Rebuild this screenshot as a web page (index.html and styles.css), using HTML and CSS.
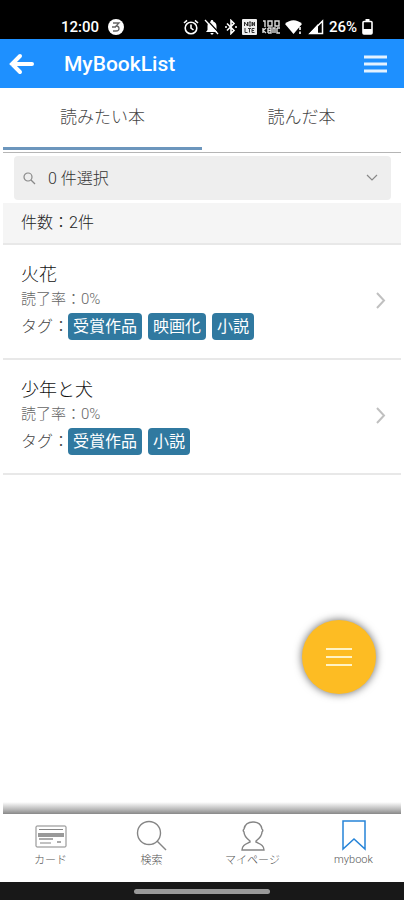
FILE: index.html
```html
<!DOCTYPE html>
<html lang="ja">
<head>
    <meta charset="UTF-8">
    <meta name="viewport" content="width=device-width, initial-scale=1.0">
    <title>MyBookList</title>
    <link rel="stylesheet" href="styles.css">
</head>
<body>

    <div class="status-bar">
        <span class="clock">12:00</span>
        <svg class="coin" width="16" height="16" viewBox="0 0 16 16"><circle cx="8" cy="8" r="8" fill="#fff"/><path d="M5 4h6L8 7c4 0 4 5 0 5H5M4 8h4" fill="none" stroke="#666" stroke-width="1.3"/></svg>
        <div class="status-icons">
            <svg width="16" height="16" viewBox="0 0 16 16" fill="none" stroke="#fff" stroke-width="1.6"><circle cx="8" cy="9" r="5.8"/><path d="M8 5.5V9l2.5 2M1 4l3-2.7M15 4l-3-2.7"/></svg>
            <svg width="16" height="16" viewBox="0 0 16 16"><path d="M8 1c1 0 1.3.6 1.3 1.5C11.500 3 12.500 5 12.500 7v4l1.500 2H2l1.500-2V7c0-2 1-4 3.200-4.500C6.700 1.600 7 1 8 1zM6.500 14h3c0 2-3 2-3 0z" fill="#fff"/><path d="M3 1l13 14" stroke="#000" stroke-width="1.200"/><path d="M1 1l13 14" stroke="#fff" stroke-width="1.300"/></svg>
            <svg width="12" height="16" viewBox="0 0 12 16" fill="none" stroke="#fff" stroke-width="1.6"><path d="M2 4.500l7 7-3 3v-13l3 3-7 7M0 8h2M10 8h2"/></svg>
            <svg width="15" height="16" viewBox="0 0 15 16"><rect width="15" height="16" rx="1" fill="#eee"/><path d="M2.500 7V3l3 4V3M7 3v4h2V3H7zM10.500 7V3l2 4V3M3 9v4.500h2.500M6 9.500h3M7.500 9.500v4M12.500 9.500H10v4h2.500M10 11.500h2" fill="none" stroke="#333" stroke-width="1"/></svg>
            <svg width="18" height="16" viewBox="0 0 18 16" fill="none" stroke="#ddd" stroke-width="1.400"><path d="M1 2h2v6M6 2h4v5H6zM13 2h4v5h-4zM1 9v5M4 9l-3 2.500L4 14M6 9v5M6 9h3v2.500H6h3V14H6M11 14V9h2v5M15 9h3M15 9v5h3"/></svg>
            <svg width="18" height="16" viewBox="0 0 18 16"><path d="M0 5c5-5 12-5 17 0l-8.500 10z" fill="#fff"/><path d="M15 8v3M15 12.500V15" stroke="#ccc" stroke-width="2"/></svg>
            <svg width="16" height="16" viewBox="0 0 16 16"><path d="M14.500 2v12.500H2z" fill="none" stroke="#fff" stroke-width="1.500"/><path d="M10 5v10H1z" fill="#fff"/></svg>
            <span class="battery-text">26%</span>
            <svg width="11" height="16" viewBox="0 0 11 16"><path d="M3.500 0h4v2h-4z" fill="#fff"/><rect x="1" y="2.500" width="9" height="12.500" rx="1" fill="none" stroke="#fff" stroke-width="1.600"/><path d="M1 10h9v5H1z" fill="#fff"/></svg>
        </div>
    </div>

    <header class="header">
        <button class="icon-button" type="button" aria-label="戻る">
            <svg width="26" height="22" viewBox="0 0 26 22" fill="none" stroke="#fff" stroke-width="4" stroke-linecap="round"><path d="M3 11h20M11 3l-8 8 8 8"/></svg>
        </button>
        <h1>MyBookList</h1>
        <button class="icon-button" type="button" aria-label="メニュー">
            <svg width="23" height="18" viewBox="0 0 23 18" stroke="#e4f2ff" stroke-width="3"><path d="M0 2h23M0 9h23M0 16h23"/></svg>
        </button>
    </header>

    <div class="tabs" role="tablist">
        <button class="tab active" type="button" role="tab" aria-selected="true">読みたい本</button>
        <button class="tab" type="button" role="tab" aria-selected="false">読んだ本</button>
    </div>

    <main class="content">
        <div class="filter">
            <svg width="13" height="13" viewBox="0 0 13 13" fill="none" stroke="#888" stroke-width="1.200"><circle cx="5" cy="5" r="4"/><path d="M8 8l4 4"/></svg>
            <select aria-label="タグで絞り込み">
                <option>0 件選択</option>
            </select>
            <svg width="12" height="8" viewBox="0 0 12 8" fill="none" stroke="#888" stroke-width="1.200"><path d="M1 1l5 5 5-5"/></svg>
        </div>

        <p class="count">件数：2件</p>

        <ul class="books">
            <li>
                <a class="book" href="#">
                    <div class="book-body">
                        <h2>火花</h2>
                        <p class="rate">読了率：0%</p>
                        <div class="tags"><span class="tags-label">タグ：</span><span class="tag">受賞作品</span><span class="tag">映画化</span><span class="tag">小説</span></div>
                    </div>
                    <svg width="10" height="17" viewBox="0 0 10 17" fill="none" stroke="#c0c0c0" stroke-width="2"><path d="M1 1l7 7.500L1 16"/></svg>
                </a>
            </li>
            <li>
                <a class="book" href="#">
                    <div class="book-body">
                        <h2>少年と犬</h2>
                        <p class="rate">読了率：0%</p>
                        <div class="tags"><span class="tags-label">タグ：</span><span class="tag">受賞作品</span><span class="tag">小説</span></div>
                    </div>
                    <svg width="10" height="17" viewBox="0 0 10 17" fill="none" stroke="#c0c0c0" stroke-width="2"><path d="M1 1l7 7.500L1 16"/></svg>
                </a>
            </li>
        </ul>

        <button class="fab" type="button" aria-label="操作メニュー">
            <svg width="26" height="20" viewBox="0 0 26 20" stroke="#fff3c4" stroke-width="2"><path d="M0 2h26M0 10h26M0 18h26"/></svg>
        </button>
    </main>

    <nav class="bottom-nav">
        <a href="#">
            <svg width="32" height="32" viewBox="0 0 32 32" fill="none" stroke="#858585" stroke-width="1"><rect x="1" y="6" width="30" height="21" rx="1"/><path d="M4 9.500h24M5 23h11"/><path d="M3 15h26" stroke="#999" stroke-width="4"/><path d="M4 19h14M22 22h4" stroke-width="2" stroke="#aaa"/></svg>
            <span>カード</span>
        </a>
        <a href="#">
            <svg width="32" height="32" viewBox="0 0 32 32" fill="none" stroke="#858585" stroke-width="1.400"><circle cx="13" cy="13" r="11.500"/><path d="M21 21l9 9"/></svg>
            <span>検索</span>
        </a>
        <a href="#">
            <svg width="32" height="32" viewBox="0 0 32 32" fill="none" stroke="#858585" stroke-width="1.400"><path d="M13 22v-1C9 18 7 16 7 12c-1-1-1-2 0-3 1-5 5-7 9-7s8 2 9 7c1 1 1 2 0 3 0 4-2 6-6 9v1c4 2 8 3 8 8H5c0-5 4-6 8-8z"/></svg>
            <span>マイページ</span>
        </a>
        <a class="current" href="#">
            <svg width="32" height="32" viewBox="0 0 32 32" fill="none" stroke="#2684d8" stroke-width="1.500"><path d="M5 1h22v28L16 19 5 29z"/></svg>
            <span>mybook</span>
        </a>
    </nav>

    <div class="gesture-bar"><span></span></div>

</body>
</html>
```

FILE: styles.css
```css
* {
    box-sizing: border-box;
}
body {
    display: flex;
    flex-direction: column;
    min-height: 100vh;
    margin: 0;
    background-color: white;
    color: #444;
    font-family: Roboto, "Noto Sans CJK JP", sans-serif;
    font-weight: 300;
}
h1, h2, p, ul {
    margin: 0;
    padding: 0;
}
ul {
    list-style: none;
}
button {
    padding: 0;
    border: 0;
    background: none;
    font: inherit;
    color: inherit;
    cursor: pointer;
}
a {
    color: inherit;
    text-decoration: none;
}
svg {
    display: block;
    flex: none;
}

/* status bar */
.status-bar {
    display: flex;
    align-items: center;
    height: 39px;
    padding: 14px 31px 0 61px;
    background-color: black;
    color: white;
    font-size: 15px;
    font-weight: 500;
}
.coin {
    margin-left: 9px;
}
.status-icons {
    display: flex;
    align-items: center;
    gap: 5px;
    margin-left: auto;
}
.battery-text {
    font-size: 15px;
}

/* header */
.header {
    display: flex;
    align-items: center;
    height: 49px;
    padding: 0 17px 0 9px;
    background-color: #1e90ff;
    color: white;
}
.header h1 {
    flex: 1;
    margin-left: 29px;
    font-size: 21px;
    font-weight: 500;
}

/* tabs */
.tabs {
    display: flex;
    height: 65px;
    margin: 0 3px;
    border-bottom: 1px solid #b5b5b5;
}
.tab {
    flex: 1;
    height: 62px;
    padding-bottom: 4px;
    border-bottom: 3px solid transparent;
    font-size: 17px;
}
.tab.active {
    border-bottom-color: #6c96bd;
}

/* list */
.content {
    flex: 1;
    padding: 3px 3px 0;
}
.filter {
    display: flex;
    align-items: center;
    gap: 12px;
    height: 44px;
    margin: 0 10px 3px 11px;
    padding: 0 13px 0 9px;
    border-radius: 4px;
    background-color: #eee;
}
.filter select {
    flex: 1;
    padding: 0;
    border: 0;
    background: none;
    appearance: none;
    color: #333;
    font: inherit;
    font-size: 16px;
}
.count {
    height: 42px;
    padding-left: 18px;
    border-bottom: 2px solid #e8e8e8;
    background-color: #f5f5f5;
    color: #222;
    font-size: 16px;
    line-height: 40px;
}
.book {
    display: flex;
    align-items: center;
    height: 115px;
    padding: 0 15px 2px 18px;
    border-bottom: 2px solid #e8e8e8;
}
.book-body {
    flex: 1;
}
.book h2 {
    color: #111;
    font-size: 18px;
    font-weight: 300;
    line-height: 26px;
}
.rate {
    color: #666;
    font-size: 15px;
    line-height: 22px;
}
.tags {
    display: flex;
    align-items: center;
    gap: 6px;
    margin-top: 3px;
    font-size: 16px;
    line-height: 27px;
}
.tags-label {
    width: 41px;
    white-space: nowrap;
}
.tag {
    padding: 0 5px;
    border-radius: 4px;
    background-color: #3079a0;
    color: white;
    font-weight: 400;
}
.fab {
    position: fixed;
    right: 28px;
    bottom: 206px;
    display: flex;
    align-items: center;
    justify-content: center;
    width: 74px;
    height: 74px;
    border-radius: 50%;
    background-color: #fdbc23;
    box-shadow: 0 0 8px rgba(0, 0, 0, 0.6);
}

/* bottom navigation */
.bottom-nav {
    position: relative;
    display: flex;
    height: 68px;
    padding-top: 6px;
    background-color: white;
}
.bottom-nav::before {
    content: "";
    position: absolute;
    right: 3px;
    bottom: 100%;
    left: 3px;
    height: 12px;
    background: linear-gradient(transparent, #bbb 60%, #888);
}
.bottom-nav a {
    display: flex;
    flex: 1;
    flex-direction: column;
    align-items: center;
    color: #555;
    font-size: 11px;
    line-height: 18px;
}
.bottom-nav .current span {
    line-height: 16px;
}
.gesture-bar {
    display: flex;
    align-items: center;
    justify-content: center;
    height: 18px;
    background-color: #181818;
}
.gesture-bar span {
    width: 136px;
    height: 5px;
    border-radius: 3px;
    background-color: #999;
}
```
